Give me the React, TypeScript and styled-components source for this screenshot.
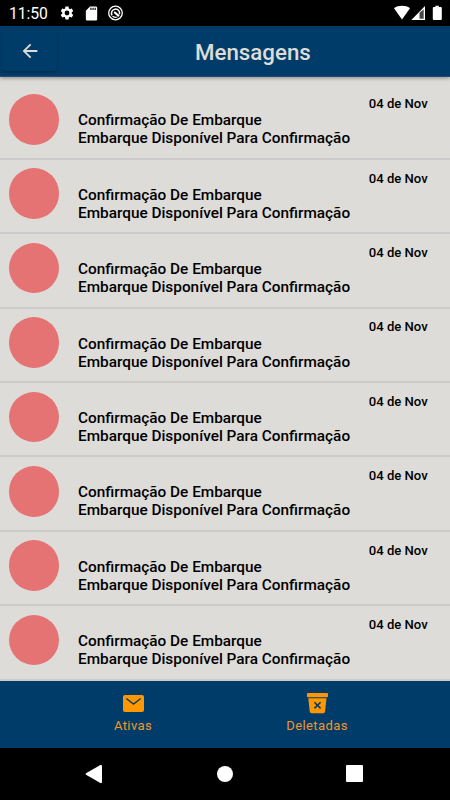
import React from "react";
import styled, { createGlobalStyle } from "styled-components";

const GlobalStyle = createGlobalStyle`
  * { box-sizing: border-box; }
  body { margin: 0; background: #000; font-family: Roboto, "Liberation Sans", sans-serif; }
`;

const Screen = styled.div`
  width: 450px;
  height: 800px;
  display: flex;
  flex-direction: column;
  overflow: hidden;
  background: #000;
`;

const StatusBar = styled.div`
  height: 26px;
  flex: none;
  display: flex;
  align-items: center;
  justify-content: space-between;
  padding: 0 7px 0 9px;
  color: #fff;
`;

const Clock = styled.span`
  width: 50px;
  font-size: 15.7px;
  line-height: 26px;
  padding-top: 1.5px;
  letter-spacing: -0.05px;
`;

const StatusGroup = styled.div<{ $gap?: number }>`
  display: flex;
  align-items: center;
  gap: ${(p) => p.$gap ?? 0}px;
  svg { display: block; }
`;

const Header = styled.header`
  position: relative;
  z-index: 1;
  flex: none;
  height: 50.5px;
  display: flex;
  align-items: center;
  background: #003c69;
  border-bottom: 1px solid #2b4a72;
  box-shadow: 0 1px 4px rgba(0, 0, 0, 0.4);
`;

const BackButton = styled.button`
  width: 55px;
  height: 40px;
  margin: 0 0 0 2px;
  padding: 0;
  border: 0;
  border-radius: 4px;
  display: flex;
  align-items: center;
  justify-content: center;
  color: #dedcd8;
  background: #003c69;
  box-shadow: 0 1px 3px rgba(0, 0, 0, 0.35);
`;

const Title = styled.h1`
  margin: 1.5px 0 0 138px;
  font-size: 22.3px;
  line-height: 28px;
  font-weight: 500;
  color: #dedcd8;
`;

const List = styled.main`
  flex: none;
  height: 604.5px;
  padding-top: 9px;
  background: #dedcd8;
`;

const Row = styled.article`
  height: 74.4px;
  display: flex;
  align-items: flex-start;
  padding: 8.6px 22.3px 0 8.7px;
  border-bottom: 2px solid #cccacb;
`;

const Avatar = styled.div`
  width: 50.5px;
  height: 50.5px;
  flex: none;
  border-radius: 50%;
  background: #e57373;
`;

const Body = styled.div`
  flex: 1;
  margin-left: 18.8px;
  display: flex;
  flex-direction: column;
  color: #000;
  font-weight: 500;
`;

const DateText = styled.time`
  align-self: flex-end;
  font-size: 13.1px;
  line-height: 15.2px;
  padding-top: 2.2px;
`;

const Line = styled.span`
  font-size: 15.35px;
  line-height: 18px;
  white-space: nowrap;
`;

const Tabs = styled.nav`
  flex: none;
  height: 66.5px;
  display: grid;
  grid-template-columns: 184px 184px;
  justify-content: center;
  background: #003c69;
`;

const Tab = styled.div`
  display: flex;
  flex-direction: column;
  align-items: center;
  padding-top: 10px;
  color: #ff9800;
  svg { display: block; margin-bottom: 1px; }
`;

const TabLabel = styled.span`
  font-size: 13px;
  line-height: 18px;
  letter-spacing: 0.4px;
  color: #f2952c;
`;

const SystemNav = styled.div`
  flex: 1;
  display: grid;
  grid-template-columns: 130px 132px 127px;
  padding-right: 3px;
  justify-content: center;
  align-items: center;
  justify-items: center;
  color: #fff;
  svg { display: block; }
`;

const Gear = () => (
  <svg width="16" height="16" viewBox="0 0 24 24" fill="currentColor">
    <path d="M19.14 12.94c.04-.3.06-.61.06-.94s-.02-.64-.07-.94l2.03-1.58c.18-.14.23-.41.12-.61l-1.92-3.32c-.12-.22-.37-.29-.59-.22l-2.39.96c-.5-.38-1.03-.7-1.62-.94l-.36-2.54c-.04-.24-.24-.41-.48-.41h-3.84c-.24 0-.43.17-.47.41l-.36 2.54c-.59.24-1.13.57-1.62.94l-2.39-.96c-.22-.08-.47 0-.59.22L2.74 8.87c-.12.21-.08.47.12.61l2.03 1.58c-.05.3-.09.63-.09.94s.02.64.07.94l-2.03 1.58c-.18.14-.23.41-.12.61l1.92 3.32c.12.22.37.29.59.22l2.39-.96c.5.38 1.03.7 1.62.94l.36 2.54c.05.24.24.41.48.41h3.84c.24 0 .44-.17.47-.41l.36-2.54c.59-.24 1.13-.56 1.62-.94l2.39.96c.22.08.47 0 .59-.22l1.92-3.32c.12-.22.07-.47-.12-.61l-2.01-1.58zM12 15.6A3.6 3.6 0 1 1 12 8.4a3.6 3.6 0 0 1 0 7.2z" />
  </svg>
);

const SdCard = () => (
  <svg width="17" height="17" viewBox="0 0 24 24" fill="currentColor">
    <path d="M18 2h-8L4.02 8 4 20c0 1.1.9 2 2 2h12c1.1 0 2-.9 2-2V4c0-1.1-.9-2-2-2zm-6 5h-1.600V4H12v3zm3 0h-1.600V4H15v3zm3 0h-1.600V4H18v3z" />
  </svg>
);

const Locator = () => (
  <svg width="15" height="16" viewBox="0 0 15 16" fill="none" stroke="currentColor">
    <circle cx="7.500" cy="8" r="6.800" strokeWidth="1.300" />
    <path d="M4.100 10.400A4.100 4.100 0 1 1 11.500 9.300" strokeWidth="1.500" />
    <path d="M4.500 11.300Q6.200 12.800 9.300 12" strokeWidth="1.200" />
    <path d="M6.200 7L11 11.200" strokeWidth="2.200" />
  </svg>
);

const messages = Array.from({ length: 8 }, (_, id) => ({
  id,
  date: "04 de Nov",
  title: "Confirmação De Embarque",
  text: "Embarque Disponível Para Confirmação",
}));

export default function App() {
  return (
    <>
      <GlobalStyle />
      <Screen>
        <StatusBar>
          <StatusGroup>
            <Clock>11:50</Clock>
            <StatusGroup $gap={8}>
              <Gear />
              <SdCard />
              <Locator />
            </StatusGroup>
          </StatusGroup>
          <StatusGroup>
            <svg width="50" height="18" viewBox="0 0 50 18" fill="currentColor">
              <path d="M1 4.200C5.400 1 12.600 1 17 4.200L9 15.400z" />
              <path d="M32 2V16H18.300z" />
              <path d="M26.500 8.800L30.700 5.200v9.500h-4.200z" fill="#484848" />
              <path d="M42.400 1.800h3.400v1.300h2q1 0 1 1v10.800q0 1-1 1h-7q-1 0-1-1V4.100q0-1 1-1h1.600z" />
            </svg>
          </StatusGroup>
        </StatusBar>
        <Header>
          <BackButton aria-label="Voltar">
            <svg width="22" height="22" viewBox="0 0 24 24" fill="currentColor">
              <path d="M20 11H7.830l5.590-5.590L12 4l-8 8 8 8 1.410-1.410L7.830 13H20v-2z" />
            </svg>
          </BackButton>
          <Title>Mensagens</Title>
        </Header>
        <List>
          {messages.map((m) => (
            <Row key={m.id}>
              <Avatar />
              <Body>
                <DateText>{m.date}</DateText>
                <Line>{m.title}</Line>
                <Line>{m.text}</Line>
              </Body>
            </Row>
          ))}
        </List>
        <Tabs>
          <Tab>
            <svg width="25" height="25" viewBox="0 0 25 25" fill="currentColor">
              <rect x="2" y="4" width="21" height="17" rx="2" />
              <path d="M5.300 7.500l7.200 5.600 7.200-5.600" fill="none" stroke="#003c69" strokeWidth="1.300" />
            </svg>
            <TabLabel>Ativas</TabLabel>
          </Tab>
          <Tab>
            <svg width="25" height="25" viewBox="0 0 25 25" fill="currentColor">
              <rect x="2" y="2" width="21" height="4.200" rx="1" />
              <path d="M3.300 7.300h18.200l-1.400 13q-.2 1.900-2 1.900H6.700q-1.800 0-2-1.900z" />
              <path d="M9.400 11.200l6.200 6.200m0-6.200l-6.200 6.200" fill="none" stroke="#003c69" strokeWidth="1.600" />
            </svg>
            <TabLabel>Deletadas</TabLabel>
          </Tab>
        </Tabs>
        <SystemNav>
          <svg width="18" height="20" viewBox="0 0 18 20" fill="currentColor">
            <path d="M1 9.200L15.400 1Q17 .5 17 2v16q0 1.500-1.600 1L1 10.800Q0 10 1 9.200z" />
          </svg>
          <svg width="16" height="16" viewBox="0 0 16 16" fill="currentColor">
            <circle cx="8" cy="8" r="8" />
          </svg>
          <svg width="17" height="17" viewBox="0 0 17 17" fill="currentColor">
            <rect width="17" height="17" rx="1" />
          </svg>
        </SystemNav>
      </Screen>
    </>
  );
}
